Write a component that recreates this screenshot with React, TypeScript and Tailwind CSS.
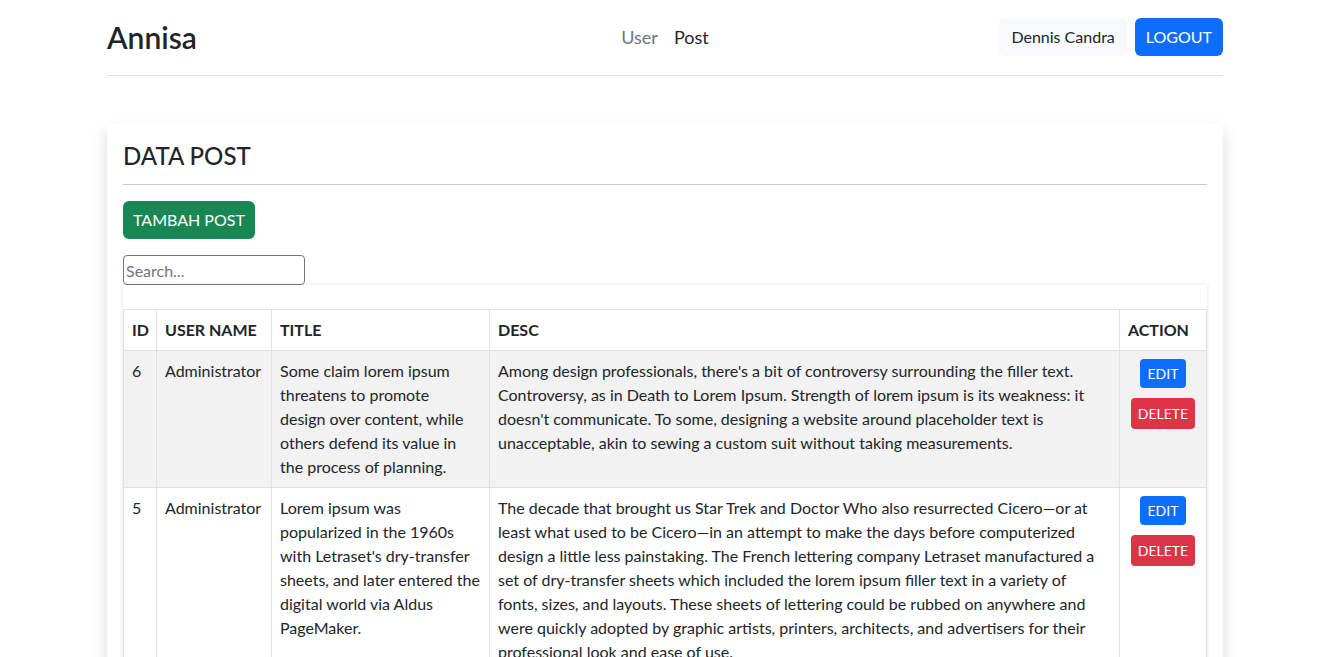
import React from 'react';

const posts = [
  {
    id: 6,
    user: 'Administrator',
    title: [
      'Some claim lorem ipsum',
      'threatens to promote',
      'design over content, while',
      'others defend its value in',
      'the process of planning.',
    ],
    desc: [
      "Among design professionals, there's a bit of controversy surrounding the filler text.",
      'Controversy, as in Death to Lorem Ipsum. Strength of lorem ipsum is its weakness: it',
      "doesn't communicate. To some, designing a website around placeholder text is",
      'unacceptable, akin to sewing a custom suit without taking measurements.',
    ],
  },
  {
    id: 5,
    user: 'Administrator',
    title: [
      'Lorem ipsum was',
      'popularized in the 1960s',
      "with Letraset's dry-transfer",
      'sheets, and later entered the',
      'digital world via Aldus',
      'PageMaker.',
    ],
    desc: [
      'The decade that brought us Star Trek and Doctor Who also resurrected Cicero\u2014or at',
      'least what used to be Cicero\u2014in an attempt to make the days before computerized',
      'design a little less painstaking. The French lettering company Letraset manufactured a',
      'set of dry-transfer sheets which included the lorem ipsum filler text in a variety of',
      'fonts, sizes, and layouts. These sheets of lettering could be rubbed on anywhere and',
      'were quickly adopted by graphic artists, printers, architects, and advertisers for their',
      'professional look and ease of use.',
    ],
  },
];

const Lines = ({ lines }: { lines: string[] }) => (
  <>
    {lines.map((l, i) => (
      <span key={i} className="block whitespace-nowrap">
        {l}
      </span>
    ))}
  </>
);

const Navbar = () => (
  <header className="grid grid-cols-3 items-center pt-[18px] pb-[19px] border-b border-[#dee2e6]">
    <a href="#" className="text-[30px] leading-[38px] font-semibold text-[#212529]">
      Annisa
    </a>
    <nav className="flex justify-center text-[18px]">
      <a href="#" className="px-2 text-[#6c757d]">User</a>
      <a href="#" className="px-2 text-[#212529]">Post</a>
    </nav>
    <div className="flex justify-end gap-2">
      <button className="h-[38px] px-3 rounded-md bg-[#f8f9fa] text-[#212529]">Dennis Candra</button>
      <button className="h-[38px] px-[11px] rounded-md bg-[#0d6efd] text-white">LOGOUT</button>
    </div>
  </header>
);

const PostTable = () => (
  <div className="shadow-[0_0_4px_rgba(0,0,0,0.12)]">
    <div className="h-6" />
    <table className="w-full table-fixed border-collapse text-[#212529]">
      <colgroup>
        <col className="w-[33px]" />
        <col className="w-[115px]" />
        <col className="w-[218px]" />
        <col className="w-[630px]" />
        <col className="w-[87px]" />
      </colgroup>
      <thead>
        <tr className="font-bold text-left">
          <th className="border border-[#dee2e6] p-2">ID</th>
          <th className="border border-[#dee2e6] p-2">USER NAME</th>
          <th className="border border-[#dee2e6] p-2">TITLE</th>
          <th className="border border-[#dee2e6] p-2">DESC</th>
          <th className="border border-[#dee2e6] p-2">ACTION</th>
        </tr>
      </thead>
      <tbody>
        {posts.map((post, index) => (
          <tr key={post.id} className={index % 2 === 0 ? 'bg-[#f2f2f2]' : 'bg-white'}>
            <td className="border border-[#dee2e6] p-2 align-top">{post.id}</td>
            <td className="border border-[#dee2e6] p-2 align-top whitespace-nowrap">{post.user}</td>
            <td className="border border-[#dee2e6] p-2 align-top">
              <Lines lines={post.title} />
            </td>
            <td className="border border-[#dee2e6] p-2 align-top">
              <Lines lines={post.desc} />
            </td>
            <td className="border border-[#dee2e6] p-2 align-top">
              <div className="flex flex-col items-center gap-2.5">
                <button className="h-[29px] px-2 rounded bg-[#0d6efd] text-white text-sm">EDIT</button>
                <button className="h-[31px] px-[7px] rounded bg-[#dc3545] text-white text-sm">DELETE</button>
              </div>
            </td>
          </tr>
        ))}
      </tbody>
    </table>
  </div>
);

export default function App() {
  return (
    <div className="min-h-screen bg-white text-base leading-6 text-[#212529] font-['Lato',sans-serif]">
      <div className="w-[1116px] ml-[107px]">
        <Navbar />
        <main className="mt-12 rounded bg-white p-4 shadow-[0_8px_16px_rgba(0,0,0,0.15)]">
          <h3 className="text-2xl leading-8 font-medium">DATA POST</h3>
          <hr className="mt-3 mb-4 border-t border-[#c8c9ca]" />
          <button className="h-[38px] px-2.5 rounded-md bg-[#198754] text-white">TAMBAH POST</button>
          <div className="mt-4">
            <input
              type="text"
              placeholder="Search..."
              className="block w-[182px] h-[30px] px-0.5 border border-[#767676] rounded-sm text-base placeholder:text-[#757575]"
            />
          </div>
          <PostTable />
        </main>
      </div>
    </div>
  );
}
